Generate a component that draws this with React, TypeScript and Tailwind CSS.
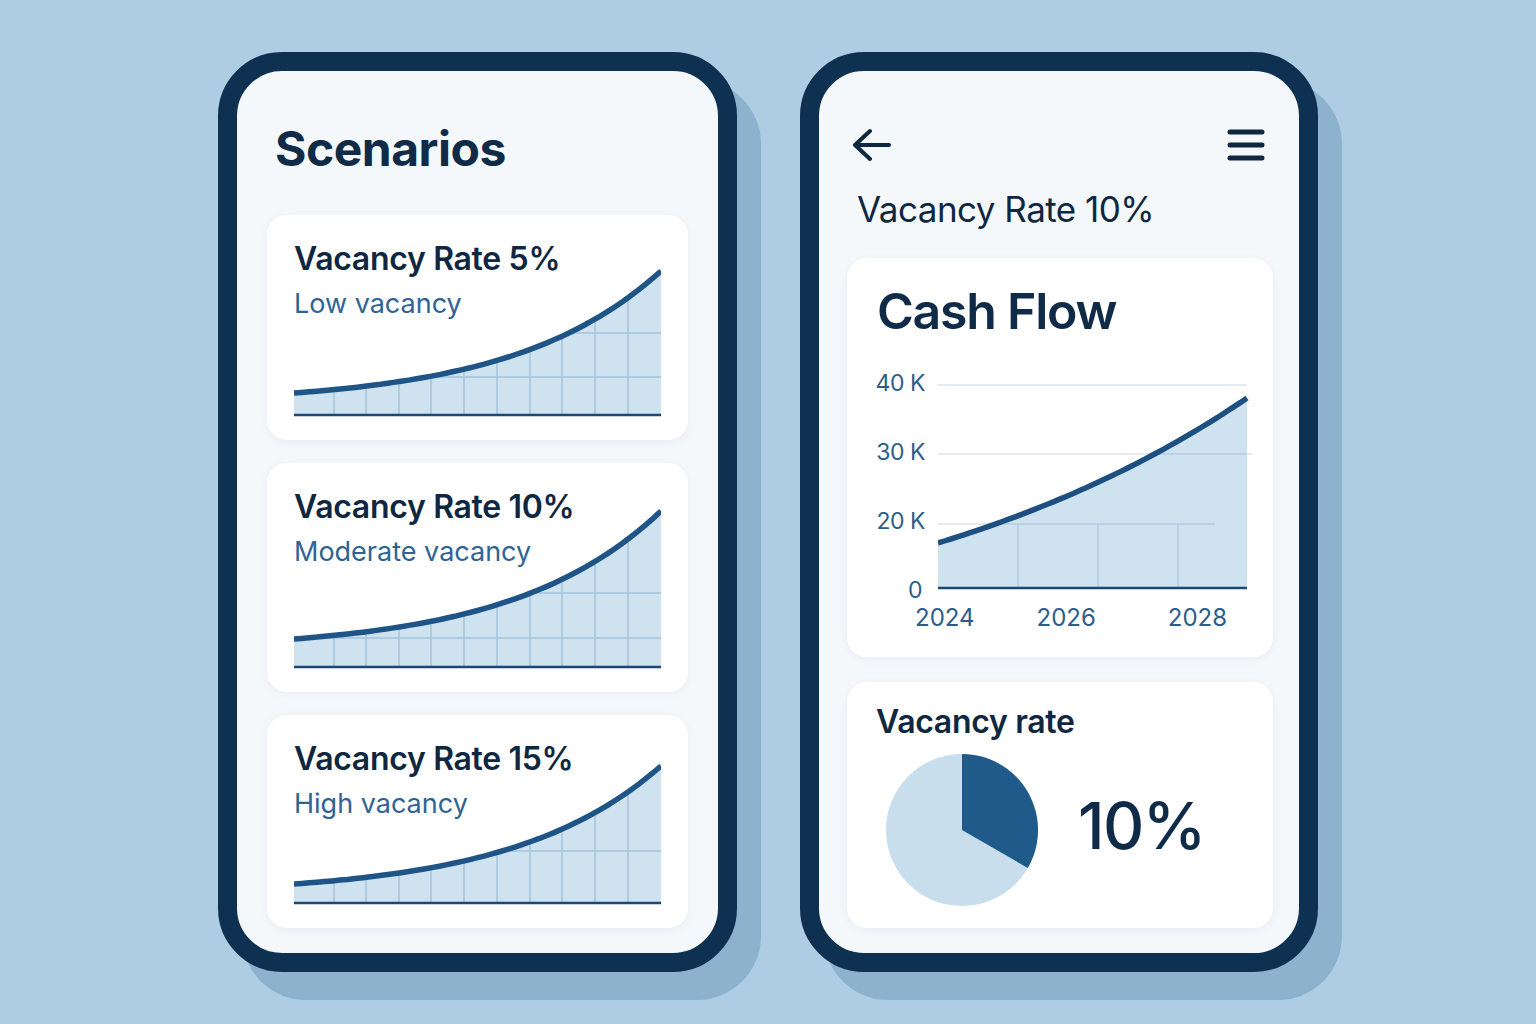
import React from "react";

type Pt = [number, number];

// exponential growth curve sampled into points
const growth = (w: number, y0: number, y1: number, k: number, steps = 48): Pt[] => {
  const pts: Pt[] = [];
  for (let i = 0; i <= steps; i++) {
    const t = i / steps;
    const f = (Math.exp(k * t) - 1) / (Math.exp(k) - 1);
    pts.push([t * w, y0 - f * (y0 - y1)]);
  }
  return pts;
};

const toPath = (pts: Pt[]) =>
  "M" + pts.map(([x, y]) => `${x.toFixed(1)},${y.toFixed(1)}`).join(" L");

const COLS = [40, 72, 105, 137, 170, 203, 236, 268, 301, 334];

type ScenarioChartProps = {
  id: string;
  height: number;
  baseY: number;
  leftY: number;
  gridYs: number[];
};

const ScenarioChart: React.FC<ScenarioChartProps> = ({ id, height, baseY, leftY, gridYs }) => {
  const w = 367;
  const line = toPath(growth(w, leftY, 5, 2.5));
  const area = `${line} L${w},${baseY} L0,${baseY} Z`;

  return (
    <svg
      width={w}
      height={height}
      viewBox={`0 0 ${w} ${height}`}
      className="col-start-1 row-start-1 self-end"
    >
      <defs>
        <clipPath id={id}>
          <path d={area} />
        </clipPath>
      </defs>
      <path d={area} fill="#cfe2f0" />
      <g clipPath={`url(#${id})`} stroke="#a5c3db" strokeWidth="1.5">
        {COLS.map((x) => (
          <line key={x} x1={x} x2={x} y1={0} y2={baseY} />
        ))}
        {gridYs.map((y) => (
          <line key={y} x1={0} x2={w} y1={y} y2={y} />
        ))}
      </g>
      <line x1={0} x2={w} y1={baseY} y2={baseY} stroke="#1d4875" strokeWidth="2.5" />
      <path d={line} fill="none" stroke="#1f5487" strokeWidth="5.5" />
    </svg>
  );
};

type Scenario = {
  title: string;
  note: string;
  h: string;
  chart: ScenarioChartProps;
};

const scenarios: Scenario[] = [
  {
    title: "Vacancy Rate 5%",
    note: "Low vacancy",
    h: "h-[225px]",
    chart: { id: "c5", height: 151, baseY: 149, leftY: 127, gridYs: [67, 111] },
  },
  {
    title: "Vacancy Rate 10%",
    note: "Moderate vacancy",
    h: "h-[229px]",
    chart: { id: "c10", height: 163, baseY: 161, leftY: 133, gridYs: [87, 132] },
  },
  {
    title: "Vacancy Rate 15%",
    note: "High vacancy",
    h: "h-[213px]",
    chart: { id: "c15", height: 144, baseY: 142, leftY: 123, gridYs: [90] },
  },
];

const ScenarioCard: React.FC<{ s: Scenario }> = ({ s }) => (
  <div
    className={`grid ${s.h} rounded-[20px] bg-white pt-[28px] pl-[27px] pr-[25px] pb-[23px] shadow-[0_2px_10px_rgba(14,49,82,0.05)]`}
  >
    <ScenarioChart {...s.chart} />
    <div className="col-start-1 row-start-1 self-start">
      <div className="text-[32px] leading-none font-semibold tracking-[-0.01em] text-[#0f2741]">
        {s.title}
      </div>
      <div className="mt-[15px] text-[27px] leading-none text-[#2e6495]">{s.note}</div>
    </div>
  </div>
);

const CashFlowChart: React.FC = () => {
  const w = 309;
  const baseY = 205;
  const line = toPath(growth(w, 160, 15, 0.8));
  const area = `${line} L${w},${baseY} L0,${baseY} Z`;

  return (
    <svg width={314} height={207} viewBox="0 0 314 207" className="mt-[12px] ml-[13px] shrink-0">
      <defs>
        <clipPath id="cf">
          <path d={area} />
        </clipPath>
      </defs>
      <line x1={0} x2={309} y1={2} y2={2} stroke="#dbe4ec" strokeWidth="1.5" />
      <line x1={0} x2={314} y1={71} y2={71} stroke="#dbe4ec" strokeWidth="1.5" />
      <line x1={0} x2={277} y1={141} y2={141} stroke="#dbe4ec" strokeWidth="1.5" />
      <path d={area} fill="#cfe2f0" />
      <g clipPath="url(#cf)" stroke="#b3cce0" strokeWidth="1.5">
        <line x1={0} x2={314} y1={71} y2={71} />
        <line x1={0} x2={277} y1={141} y2={141} />
        <line x1={80} x2={80} y1={141} y2={baseY} />
        <line x1={160} x2={160} y1={141} y2={baseY} />
        <line x1={240} x2={240} y1={141} y2={baseY} />
      </g>
      <line x1={0} x2={w} y1={baseY} y2={baseY} stroke="#1d4875" strokeWidth="2.5" />
      <path d={line} fill="none" stroke="#1d4f80" strokeWidth="5.5" />
    </svg>
  );
};

const Pie: React.FC = () => (
  <svg width={152} height={152} viewBox="0 0 152 152" className="shrink-0">
    <circle cx={76} cy={76} r={76} fill="#c8deed" />
    <path d="M76,76 L76,0 A76,76 0 0 1 141.8,114 Z" fill="#1f5a8a" />
  </svg>
);

const phone =
  "h-[920px] rounded-[64px] border-[19px] border-[#0e3152] bg-[#f4f8fb] shadow-[24px_28px_0_0_#8cb2ce] flex flex-col";

export default function App() {
  return (
    <div className="min-h-[1024px] w-[1536px] bg-[#aecde2] pl-[218px] pt-[52px] flex gap-[63px] font-[Inter,sans-serif] text-[#0f2741]">
      {/* scenarios list */}
      <div className={`${phone} w-[519px] px-[30px] pt-[54px]`}>
        <h1 className="pl-[8px] text-[48px] leading-none font-bold tracking-[-0.01em] text-[#0f2b48]">
          Scenarios
        </h1>
        <div className="mt-[42px] flex flex-col gap-[23px]">
          {scenarios.map((s) => (
            <ScenarioCard key={s.title} s={s} />
          ))}
        </div>
      </div>

      {/* scenario detail */}
      <div className={`${phone} w-[518px] pl-[28px] pr-[26px] pt-[58px]`}>
        <div className="flex items-center justify-between pl-[6px] pr-[8px] h-[32px]">
          <svg width={38} height={34} viewBox="0 0 38 34" className="text-[#0f2741]">
            <path
              d="M2 17 L17 3 M2 17 L17 31 M2 17 L36 17"
              fill="none"
              stroke="currentColor"
              strokeWidth="4"
              strokeLinecap="round"
              strokeLinejoin="round"
            />
          </svg>
          <svg width={38} height={34} viewBox="0 0 38 34" className="text-[#0f2741]">
            <path
              d="M3 4 H35 M3 17 H35 M3 30 H35"
              fill="none"
              stroke="currentColor"
              strokeWidth="5"
              strokeLinecap="round"
            />
          </svg>
        </div>

        <div className="mt-[31px] pl-[10px] text-[35px] leading-none tracking-[-0.015em]">
          Vacancy Rate 10%
        </div>

        <div className="mt-[31px] h-[399px] rounded-[20px] bg-white pt-[28px] pl-[28px] pr-[18px] shadow-[0_2px_10px_rgba(14,49,82,0.05)]">
          <div className="pl-[2px] text-[50px] leading-none font-semibold tracking-tight text-[#0f2b48]">
            Cash Flow
          </div>
          <div className="mt-[35px] flex">
            <div className="w-[50px] shrink-0 h-[231px] flex flex-col justify-between items-end whitespace-nowrap text-[23px] leading-[24px] tracking-[-0.02em] text-[#2c5d8c]">
              <span>40 K</span>
              <span>30 K</span>
              <span>20 K</span>
              <span className="pr-[3px]">0</span>
            </div>
            <CashFlowChart />
          </div>
          <div className="mt-[4px] ml-[40px] flex text-[24px] leading-[24px] text-[#2c5d8c]">
            <span>2024</span>
            <span className="ml-[62px]">2026</span>
            <span className="ml-[72px]">2028</span>
          </div>
        </div>

        <div className="mt-[25px] h-[246px] rounded-[20px] bg-white pt-[24px] pl-[29px] shadow-[0_2px_10px_rgba(14,49,82,0.05)]">
          <div className="text-[32px] leading-none font-semibold tracking-[-0.01em]">Vacancy rate</div>
          <div className="mt-[16px] pl-[10px] flex items-center gap-[40px]">
            <Pie />
            <span className="mb-[8px] text-[64px] leading-none font-medium tracking-tight text-[#0f2b48]">
              10%
            </span>
          </div>
        </div>
      </div>
    </div>
  );
}
